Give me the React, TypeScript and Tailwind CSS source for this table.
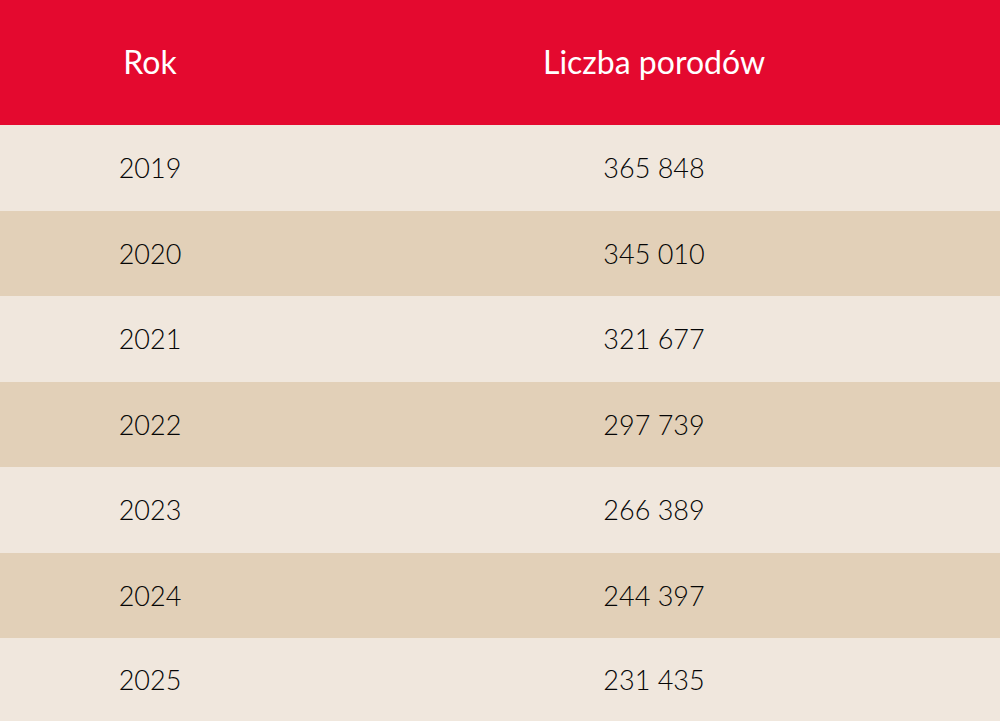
import React from "react";

const rows = [
  ["2019", "365 848"],
  ["2020", "345 010"],
  ["2021", "321 677"],
  ["2022", "297 739"],
  ["2023", "266 389"],
  ["2024", "244 397"],
  ["2025", "231 435"],
];

export default function App() {
  return (
    <div
      className="w-[1000px] h-[721px] grid grid-rows-[125px_86px_85px_86px_85px_86px_85px_83px] overflow-hidden"
      style={{ fontFamily: "Lato, 'Open Sans', sans-serif" }}
    >
      <div className="grid grid-cols-[300px_1fr] bg-[#E4092F] text-white text-[32px]">
        <div className="flex items-center justify-center pb-[2px]">Rok</div>
        <div className="flex items-center justify-center pl-[8px] pb-[2px]">Liczba porodów</div>
      </div>
      {rows.map(([y, n], i) => (
        <div
          key={y}
          className={`grid grid-cols-[300px_1fr] text-[27px] font-light text-[#050505] ${
            i % 2 === 0 ? "bg-[#F0E7DD]" : "bg-[#E2D0B8]"
          }`}
        >
          <div className="flex items-center justify-center pt-[1px]">{y}</div>
          <div className="flex items-center justify-center pl-[8px] pt-[1px]">{n}</div>
        </div>
      ))}
    </div>
  );
}
